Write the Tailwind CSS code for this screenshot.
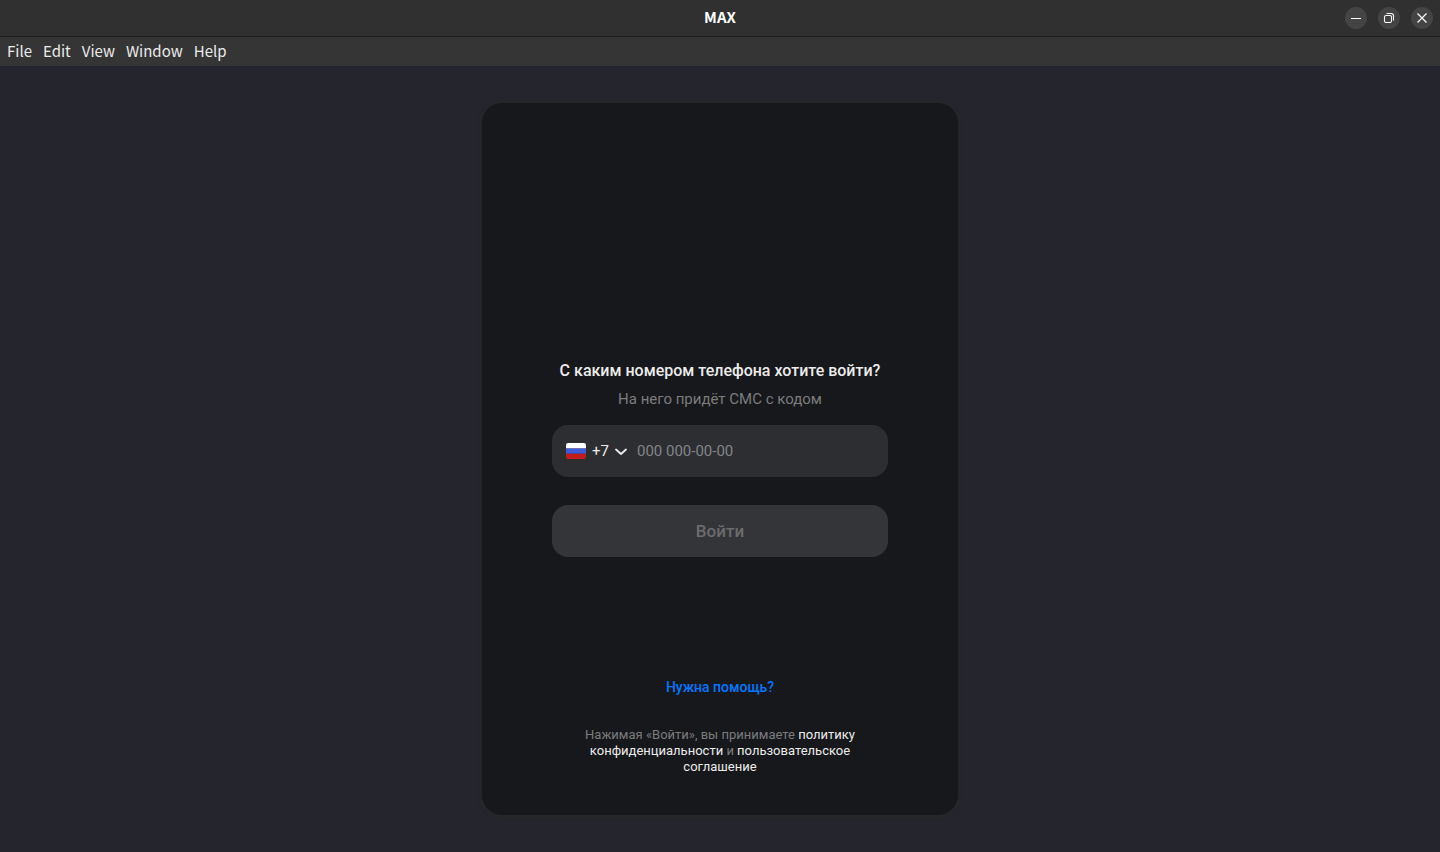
<!DOCTYPE html>
<html lang="ru">
<head>
    <meta charset="UTF-8">
    <meta name="viewport" content="width=device-width, initial-scale=1.0">
    <title>MAX</title>
    <script src="https://cdn.jsdelivr.net/npm/@tailwindcss/browser@4"></script>
</head>
<body class="min-h-screen flex flex-col bg-[#25252d] font-['Roboto',sans-serif] text-[#ececec]">
    <!-- Заголовок окна -->
    <header class="grid grid-cols-[1fr_auto_1fr] items-center h-[37px] px-[7px] bg-[#303030] border-b border-[#1c1c1c]">
        <h1 class="col-start-2 pb-[2px] font-['Noto_Sans_CJK_SC',sans-serif] text-[15px] leading-5 font-bold text-white">MAX</h1>
        <div class="flex justify-end gap-[11px]">
            <button type="button" aria-label="Свернуть" class="size-[22px] rounded-full bg-[#444444] hover:bg-[#505050] text-white">
                <svg class="size-[22px]" viewBox="0 0 22 22" fill="none" stroke="currentColor"><path d="M6 11.5h10"/></svg>
            </button>
            <button type="button" aria-label="Восстановить" class="size-[22px] rounded-full bg-[#444444] hover:bg-[#505050] text-white">
                <svg class="size-[22px]" viewBox="0 0 22 22" fill="none" stroke="currentColor" stroke-width="1.1"><rect x="6.5" y="8.5" width="7" height="7" rx="1.5"/><path d="M8.5 6.5h4.5a2.5 2.5 0 0 1 2.5 2.5v4.5"/></svg>
            </button>
            <button type="button" aria-label="Закрыть" class="size-[22px] rounded-full bg-[#444444] hover:bg-[#505050] text-white">
                <svg class="size-[22px]" viewBox="0 0 22 22" fill="none" stroke="currentColor" stroke-width="1.2"><path d="M6.5 6.5l9 9M15.5 6.5l-9 9"/></svg>
            </button>
        </div>
    </header>

    <!-- Меню -->
    <nav class="flex items-center gap-[11px] h-[29px] px-[7px] pb-[2px] bg-[#353535] font-['Noto_Sans_CJK_SC',sans-serif] text-[15px] leading-5 text-[#ebebeb]">
        <button type="button">File</button>
        <button type="button">Edit</button>
        <button type="button">View</button>
        <button type="button">Window</button>
        <button type="button">Help</button>
    </nav>

    <main class="flex-1 flex justify-center px-4 py-[37px]">
        <section class="grid grid-rows-[1fr_auto_1fr] w-full max-w-[476px] px-[70px] pt-[38px] pb-10 rounded-[20px] bg-[#17181b] shadow-[0_1px_4px_rgba(40,42,40,0.9)] text-center">
            <form class="row-start-2 flex flex-col">
                <h2 class="text-base leading-6 font-medium">С каким номером телефона хотите войти?</h2>
                <p class="mt-[6px] text-[15px] leading-5 text-[#7b7c7e]">На него придёт СМС с кодом</p>
                <div class="flex items-center h-[52px] mt-4 px-[14px] rounded-2xl bg-[#2d2e31] text-[15px]">
                    <button type="button" aria-label="Код страны" class="flex items-center gap-[6px]">
                        <svg class="w-5 h-4" viewBox="0 0 20 16">
                            <clipPath id="flag"><rect width="20" height="16" rx="2"/></clipPath>
                            <g clip-path="url(#flag)">
                                <path fill="#fff" d="M0 0h20v5.5H0z"/>
                                <path fill="#3f5bd8" d="M0 5.5h20v5.2H0z"/>
                                <path fill="#c11b1b" d="M0 10.7h20V16H0z"/>
                            </g>
                        </svg>
                        <span>+7</span>
                        <svg class="w-3 h-4" viewBox="0 0 12 16" fill="none" stroke="currentColor" stroke-width="1.8" stroke-linecap="round" stroke-linejoin="round"><path d="M1 6.5l5 4.5 5-4.5"/></svg>
                    </button>
                    <input type="tel" aria-label="Номер телефона" placeholder="000 000-00-00" class="flex-1 min-w-0 ml-[10px] outline-none placeholder:text-[#848587]">
                </div>
                <button type="submit" disabled class="h-[52px] mt-7 pt-[2px] rounded-2xl bg-[#343538] text-[17px] font-medium text-[#6b6c6e]">Войти</button>
            </form>

            <footer class="row-start-3 self-end">
                <a href="#" class="block text-sm leading-5 font-medium text-[#0077ff]">Нужна помощь?</a>
                <p class="mt-[30px] px-4 text-[13px] leading-4 text-[#7b7c7e]">
                    Нажимая «Войти», вы принимаете <a href="#" class="text-[#ececec]">политику конфиденциальности</a> и <a href="#" class="text-[#ececec]">пользовательское соглашение</a>
                </p>
            </footer>
        </section>
    </main>
</body>
</html>
